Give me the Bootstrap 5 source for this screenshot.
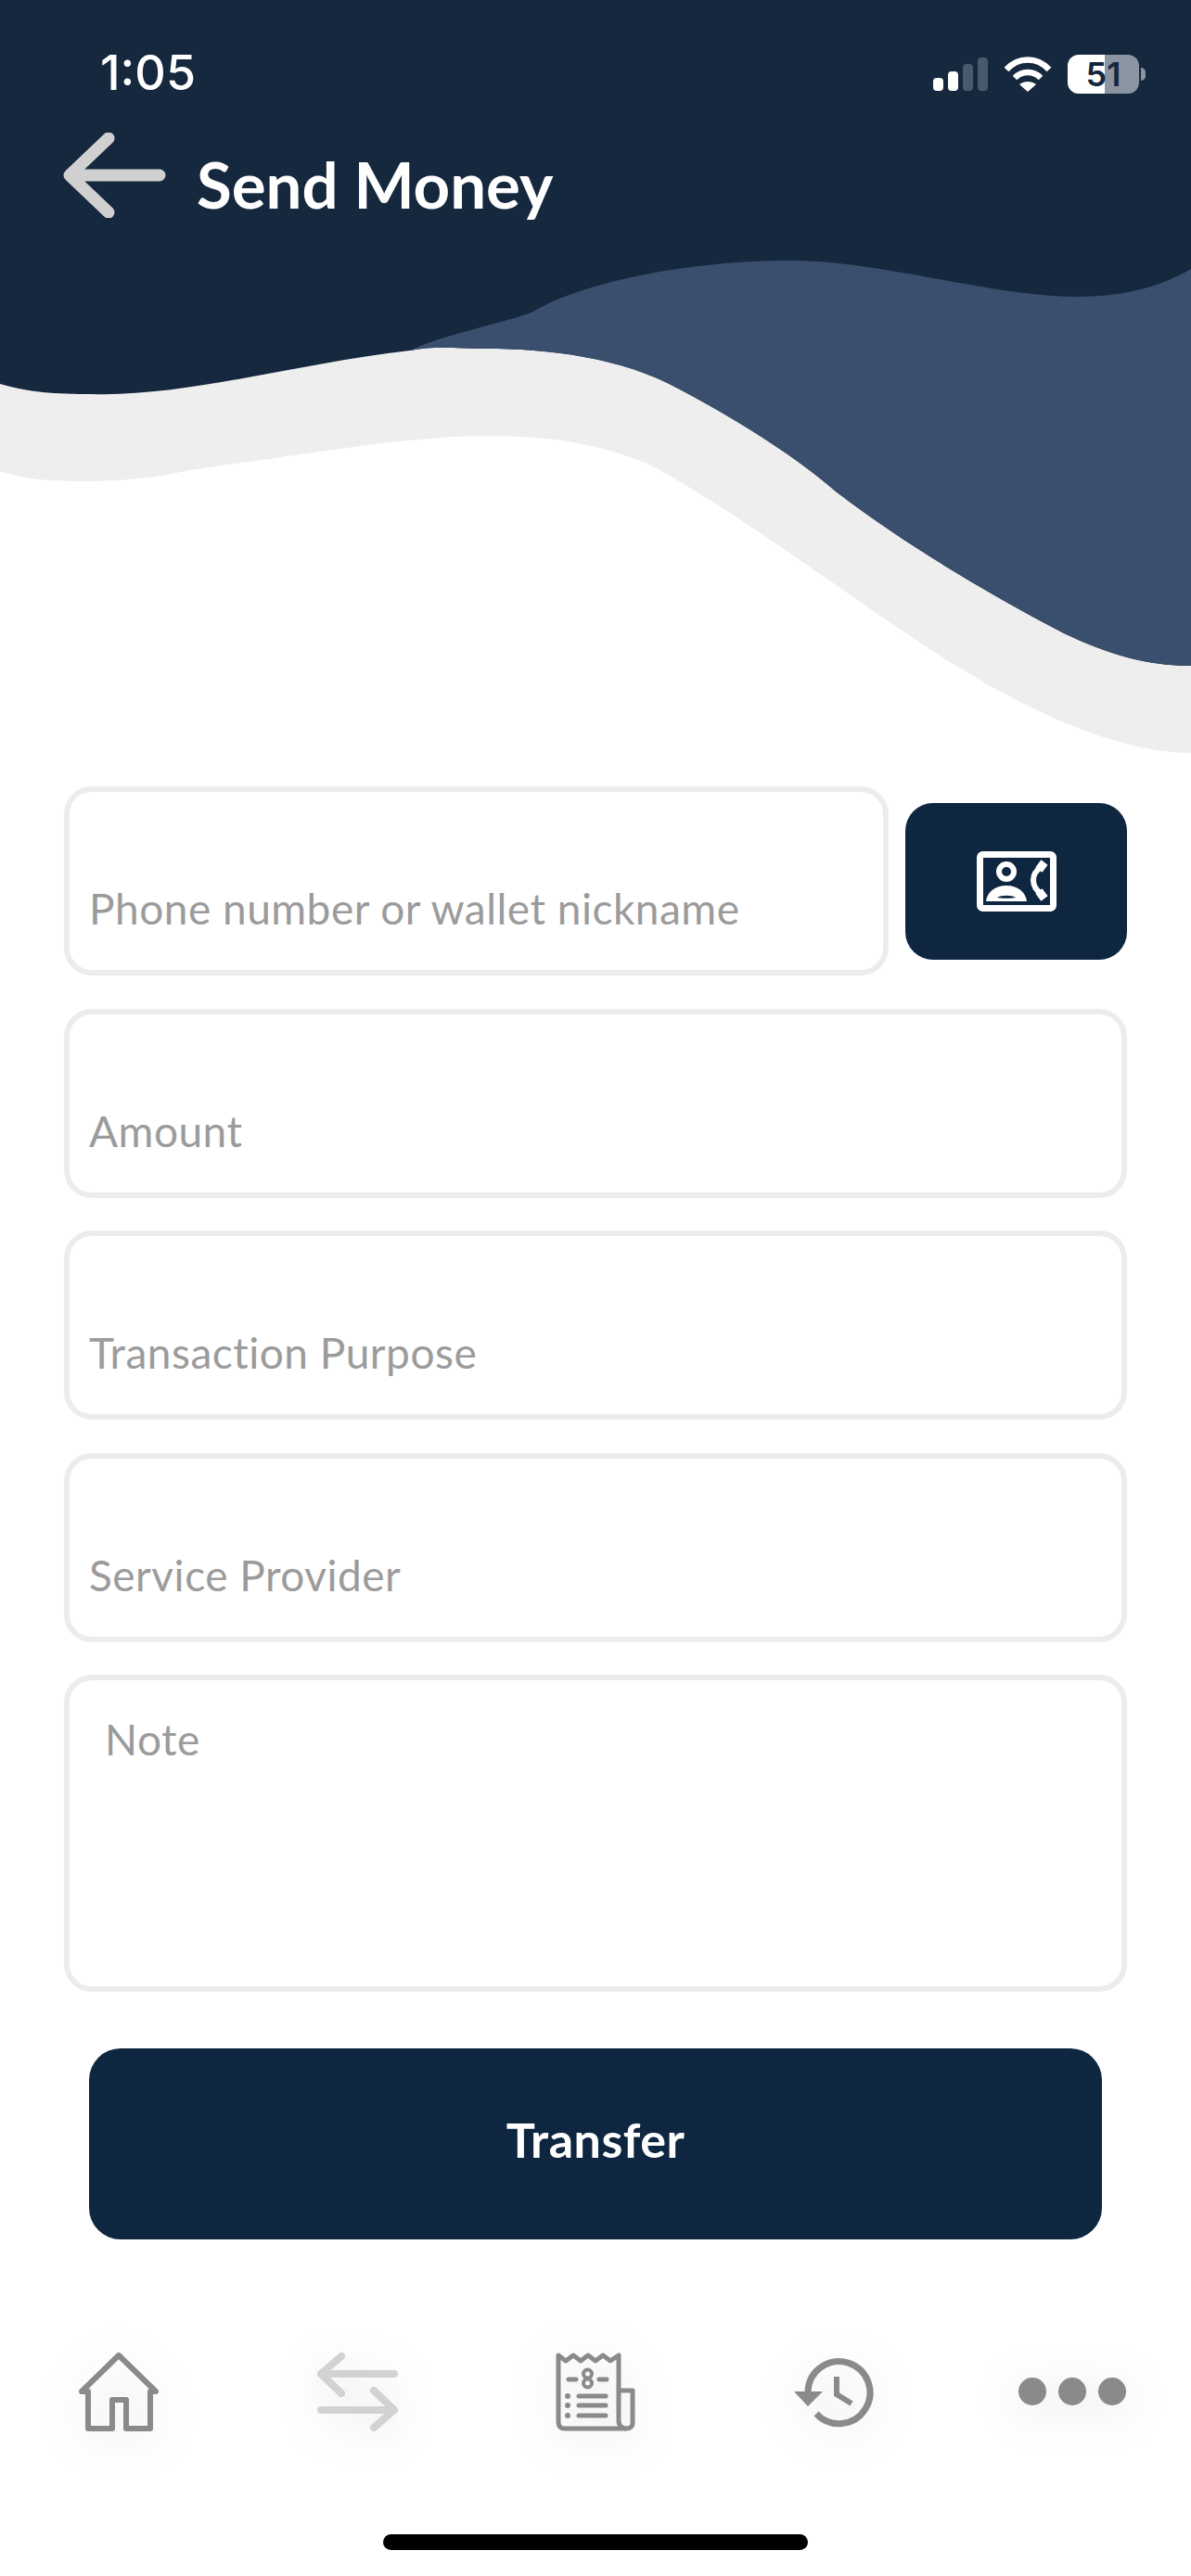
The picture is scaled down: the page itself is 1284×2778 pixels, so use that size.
<!DOCTYPE html>
<html lang="en">
<head>
    <meta charset="UTF-8">
    <meta name="viewport" content="width=device-width, initial-scale=1.0">
    <title>Send Money</title>
    <link href="https://cdn.jsdelivr.net/npm/bootstrap@5.3.0/dist/css/bootstrap.min.css" rel="stylesheet">
    <style>
        body {
            width: 1284px;
            height: 2778px;
            overflow: hidden;
            background: #fff;
            font-family: "Lato", "Noto Sans", sans-serif;
        }

        /* header with the waves */
        .top-area { height: 848px; }
        .wave-bg { left: 0; top: 0; }
        .status-row { padding: 59px 49px 0 108px; height: 100px; }
        .clock {
            font-family: "Inter", sans-serif;
            font-size: 52px;
            font-weight: 500;
            line-height: 40px;
        }
        .status-icons { gap: 17px; }
        .signal-group { gap: 5px; }
        .signal-bar { width: 11px; border-radius: 4px; background: #fff; }
        .signal-bar.off { background: #4a5a6e; }
        .bar-1 { height: 14px; }
        .bar-2 { height: 21px; }
        .bar-3 { height: 29px; }
        .bar-4 { height: 36px; }
        .battery-group { gap: 2px; }
        .battery-box {
            width: 77px;
            height: 42px;
            border-radius: 12px;
            background: linear-gradient(90deg, #fff 52%, #8b95a1 52%);
            color: #15273d;
            font-family: "Inter", sans-serif;
            font-size: 36px;
            font-weight: 600;
            line-height: 42px;
        }
        .battery-nub { width: 5px; height: 14px; border-radius: 0 6px 6px 0; background: #8b95a1; }
        .title-row { padding-left: 64px; margin-top: 39px; gap: 30px; }
        .page-title {
            font-size: 69px;
            font-weight: 700;
            line-height: 80px;
            margin: 20px 0 0;
            color: #fff;
        }

        /* form */
        .send-form { padding: 0 69px; }
        .field-stack { gap: 35.5px; }
        .phone-row { gap: 18px; }
        .field-box.form-floating > .form-control {
            height: 204px;
            min-height: 204px;
            border: 6px solid #ececec;
            border-radius: 30px;
            box-shadow: none;
            resize: none;
        }
        .field-box.form-floating > textarea.form-control {
            height: 342px;
        }
        .field-box.form-floating > label {
            height: auto;
            top: auto;
            bottom: 44px;
            left: 27px;
            padding: 0;
            border: 0;
            transform: none;
            opacity: 1;
            color: #9b9b9b;
            font-size: 46px;
            letter-spacing: .5px;
            line-height: 56px;
        }
        .field-box.note-box.form-floating > label {
            top: 42px;
            bottom: auto;
            left: 44px;
        }
        .contact-btn {
            width: 239px;
            height: 169px;
            flex: none;
            border: 0;
            border-radius: 30px;
            background: #0f2640;
        }
        .transfer-btn {
            display: block;
            width: 1092px;
            height: 206px;
            margin: 61px 0 0 27px;
            padding-bottom: 16px;
            border: 0;
            border-radius: 34px;
            background: #0f2640;
            color: #fff;
            font-size: 52px;
            letter-spacing: .5px;
            font-weight: 700;
        }
        .transfer-btn:hover, .contact-btn:hover { background: #0f2640; color: #fff; }

        /* bottom tabs */
        .tab-row { height: 86px; margin-top: 121px; }
        .tab-item { width: 20%; }
        .tab-item svg { filter: drop-shadow(0 8px 22px rgba(110, 120, 160, .2)); overflow: visible; }
        .home-line { width: 458px; height: 17px; margin: 111px auto 0; border-radius: 9px; background: #000; }
    </style>
</head>
<body>
    <header class="top-area position-relative text-white">
        <svg class="wave-bg position-absolute" width="1284" height="848" viewBox="0 0 1284 848">
            <!-- faixa cinza -->
            <path fill="#eeeeee" d="M0 0H1284V812C1200 812 1090 760 983 687C900 632 790 550 704 503C650 478 590 470 524 470C440 470 330 490 205 507C170 515 130 519 94 519C55 519 25 517 0 508Z"/>
            <!-- azul escuro -->
            <path fill="#16283e" d="M0 0H1284V718C1240 718 1200 708 1147 683C1065 640 980 590 901 530C855 490 790 450 733 420C670 385 590 376 524 376C495 376 470 372 442 378C320 392 200 428 100 425C60 425 30 423 0 414Z"/>
            <!-- azul claro -->
            <path fill="#3a4f6d" d="M442 378C480 360 530 352 573 337C625 305 740 281 852 281C950 281 1070 320 1163 320C1210 320 1250 310 1284 290V718C1240 718 1200 708 1147 683C1065 640 980 590 901 530C855 490 790 450 733 420C670 385 590 376 524 376C495 376 470 372 442 378Z"/>
        </svg>

        <div class="status-row position-relative d-flex justify-content-between align-items-start">
            <span class="clock">1:05</span>
            <div class="status-icons d-flex align-items-center">
                <div class="signal-group d-flex align-items-end">
                    <span class="signal-bar bar-1"></span>
                    <span class="signal-bar bar-2"></span>
                    <span class="signal-bar off bar-3"></span>
                    <span class="signal-bar off bar-4"></span>
                </div>
                <svg width="52" height="40" viewBox="0 0 52 40">
                    <path d="M3 15C16 1 36 1 49 15" fill="none" stroke="#fff" stroke-width="6.5"/>
                    <path d="M12 24C20 16 32 16 40 24" fill="none" stroke="#fff" stroke-width="6.5"/>
                    <path d="M17 31C22 27 30 27 35 31L26 39Z" fill="#fff"/>
                </svg>
                <div class="battery-group d-flex align-items-center">
                    <span class="battery-box text-center">51</span>
                    <span class="battery-nub"></span>
                </div>
            </div>
        </div>

        <div class="title-row position-relative d-flex align-items-center">
            <svg width="118" height="92" viewBox="0 0 118 92">
                <path d="M53 6L11 46L53 86M11 46H108" fill="none" stroke="#d0d0d0" stroke-width="13" stroke-linecap="round" stroke-linejoin="round"/>
            </svg>
            <h1 class="page-title">Send Money</h1>
        </div>
    </header>

    <form class="send-form" onsubmit="return false">
        <div class="field-stack d-flex flex-column">
            <div class="phone-row d-flex align-items-center">
                <div class="field-box form-floating flex-grow-1">
                    <input type="text" class="form-control" id="phone" placeholder=" ">
                    <label for="phone">Phone number or wallet nickname</label>
                </div>
                <button type="button" class="contact-btn btn d-flex align-items-center justify-content-center">
                    <svg width="86" height="65" viewBox="0 0 86 65">
                        <rect x="3.5" y="3.5" width="79" height="58" rx="3" fill="none" stroke="#fff" stroke-width="7"/>
                        <circle cx="32" cy="22" r="8" fill="none" stroke="#fff" stroke-width="6"/>
                        <path fill="#fff" fill-rule="evenodd" d="M10 54C11 44 20 37 32 37C44 37 53 44 54 54ZM22 50C26 47 38 47 42 50C38 51 26 51 22 50Z"/>
                        <path d="M70 17C58 24 58 38 70 46" fill="none" stroke="#fff" stroke-width="6"/>
                        <path d="M73 12L67 20M67 43L73 51" fill="none" stroke="#fff" stroke-width="9"/>
                    </svg>
                </button>
            </div>
            <div class="field-box form-floating">
                <input type="text" class="form-control" id="amount" placeholder=" ">
                <label for="amount">Amount</label>
            </div>
            <div class="field-box form-floating">
                <input type="text" class="form-control" id="purpose" placeholder=" ">
                <label for="purpose">Transaction Purpose</label>
            </div>
            <div class="field-box form-floating">
                <input type="text" class="form-control" id="provider" placeholder=" ">
                <label for="provider">Service Provider</label>
            </div>
            <div class="field-box note-box form-floating">
                <textarea class="form-control" id="note" placeholder=" "></textarea>
                <label for="note">Note</label>
            </div>
        </div>
        <button type="submit" class="transfer-btn btn">Transfer</button>
    </form>

    <nav class="tab-row d-flex align-items-center">
        <div class="tab-item d-flex justify-content-center">
            <svg width="86" height="85" viewBox="0 0 86 85">
                <path d="M43 3L83 42H77V82H51V51H36V82H10V42H3Z" fill="none" stroke="#8a8a8a" stroke-width="6" stroke-linejoin="round"/>
            </svg>
        </div>
        <div class="tab-item d-flex justify-content-center">
            <svg width="87" height="85" viewBox="0 0 87 85">
                <path d="M26 4L4 23L26 44M4 23H83M61 41L83 62L61 81M83 62H4" fill="none" stroke="#d2d2d2" stroke-width="8" stroke-linecap="round" stroke-linejoin="round"/>
            </svg>
        </div>
        <div class="tab-item d-flex justify-content-center">
            <svg width="86" height="85" viewBox="0 0 86 85">
                <path d="M3 3L11 9L19 3L27 9L35 3L43 9L51 3L59 9L68 3V41H83V76C83 80 80 82 76 82H10C5 82 3 79 3 75Z" fill="none" stroke="#8a8a8a" stroke-width="5" stroke-linejoin="round"/>
                <path d="M68 41V74C68 79 72 82 76 82" fill="none" stroke="#8a8a8a" stroke-width="5"/>
                <path d="M14 29H22M47 29H55M25 47H54M25 57H54M25 68H54" fill="none" stroke="#8a8a8a" stroke-width="5" stroke-linecap="round"/>
                <circle cx="34.500" cy="23" r="4.500" fill="none" stroke="#8a8a8a" stroke-width="4"/>
                <circle cx="34.500" cy="33" r="4.500" fill="none" stroke="#8a8a8a" stroke-width="4"/>
                <circle cx="13" cy="47" r="3" fill="#8a8a8a"/>
                <circle cx="13" cy="57" r="3" fill="#8a8a8a"/>
                <circle cx="13" cy="68" r="3" fill="#8a8a8a"/>
            </svg>
        </div>
        <div class="tab-item d-flex justify-content-center">
            <svg width="85" height="73" viewBox="0 0 85 73">
                <path d="M15 36A33.500 33.500 0 1 1 24 60" fill="none" stroke="#8a8a8a" stroke-width="7"/>
                <path d="M0 36H31L15 52Z" fill="#8a8a8a"/>
                <path d="M46 20V39L62 49" fill="none" stroke="#8a8a8a" stroke-width="6"/>
            </svg>
        </div>
        <div class="tab-item d-flex justify-content-center">
            <svg width="116" height="30" viewBox="0 0 116 30" fill="#8a8a8a">
                <circle cx="15" cy="15" r="15"/>
                <circle cx="58" cy="15" r="15"/>
                <circle cx="101" cy="15" r="15"/>
            </svg>
        </div>
    </nav>
    <div class="home-line"></div>

    <script src="https://cdn.jsdelivr.net/npm/bootstrap@5.3.0/dist/js/bootstrap.bundle.min.js"></script>
</body>
</html>
